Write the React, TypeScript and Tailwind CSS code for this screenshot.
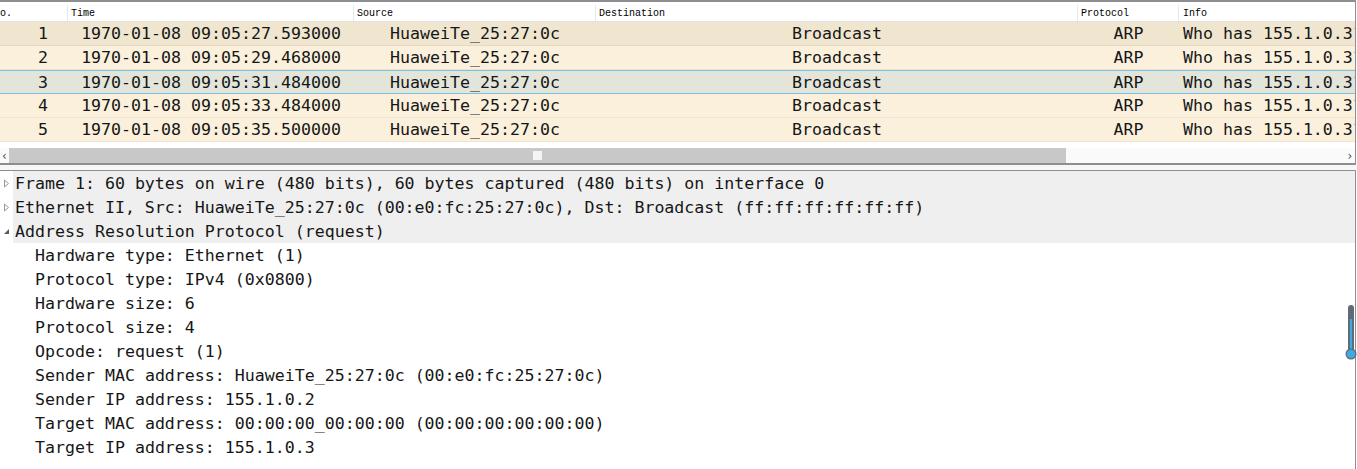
import React from 'react';

interface Packet {
  no: number;
  time: string;
  source: string;
  destination: string;
  protocol: string;
  info: string;
}

const packets: Packet[] = [
  { no: 1, time: '1970-01-08 09:05:27.593000', source: 'HuaweiTe_25:27:0c', destination: 'Broadcast', protocol: 'ARP', info: 'Who has 155.1.0.3? Tell 155.1.0.2' },
  { no: 2, time: '1970-01-08 09:05:29.468000', source: 'HuaweiTe_25:27:0c', destination: 'Broadcast', protocol: 'ARP', info: 'Who has 155.1.0.3? Tell 155.1.0.2' },
  { no: 3, time: '1970-01-08 09:05:31.484000', source: 'HuaweiTe_25:27:0c', destination: 'Broadcast', protocol: 'ARP', info: 'Who has 155.1.0.3? Tell 155.1.0.2' },
  { no: 4, time: '1970-01-08 09:05:33.484000', source: 'HuaweiTe_25:27:0c', destination: 'Broadcast', protocol: 'ARP', info: 'Who has 155.1.0.3? Tell 155.1.0.2' },
  { no: 5, time: '1970-01-08 09:05:35.500000', source: 'HuaweiTe_25:27:0c', destination: 'Broadcast', protocol: 'ARP', info: 'Who has 155.1.0.3? Tell 155.1.0.2' },
];

const treeTop = [
  { text: 'Frame 1: 60 bytes on wire (480 bits), 60 bytes captured (480 bits) on interface 0', open: false },
  { text: 'Ethernet II, Src: HuaweiTe_25:27:0c (00:e0:fc:25:27:0c), Dst: Broadcast (ff:ff:ff:ff:ff:ff)', open: false },
  { text: 'Address Resolution Protocol (request)', open: true },
];

const arpFields = [
  'Hardware type: Ethernet (1)',
  'Protocol type: IPv4 (0x0800)',
  'Hardware size: 6',
  'Protocol size: 4',
  'Opcode: request (1)',
  'Sender MAC address: HuaweiTe_25:27:0c (00:e0:fc:25:27:0c)',
  'Sender IP address: 155.1.0.2',
  'Target MAC address: 00:00:00_00:00:00 (00:00:00:00:00:00)',
  'Target IP address: 155.1.0.3',
];

const mono = "font-['DejaVu_Sans_Mono',monospace]";
const cols = 'grid grid-cols-[68px_286px_242px_482px_101px_1fr]';

const rowStyle = (no: number) => {
  if (no === 1) return 'bg-[#f0e6d0] border-b border-[#e4dac3]';
  if (no === 3) return 'bg-[#e3e5da] border-y border-[#7cc0e4]';
  return 'bg-[#faf0dc] border-b border-[#eee4cf]';
};

export default function App() {
  return (
    <div className={`w-[1357px] h-[469px] bg-white overflow-hidden relative text-[#161616] ${mono}`}>
      {/* Packet list */}
      <div className="w-[1356px] h-[165px] border-t-2 border-b-2 border-r border-[#8e8e92] flex flex-col">
        {/* Column header */}
        <div className={`${cols} h-[20px] shrink-0 border-b border-[#e3e3e3] bg-white pt-[3px] text-[10px] text-black font-['Liberation_Mono',monospace]`}>
          <div className="border-r border-[#e2e8f0] flex items-center overflow-hidden">
            <span className="-ml-[6px]">No.</span>
          </div>
          <div className="border-r border-[#e2e8f0] flex items-center pl-[3px]">Time</div>
          <div className="border-r border-[#e2e8f0] flex items-center pl-[3px]">Source</div>
          <div className="border-r border-[#e2e8f0] flex items-center pl-[3px]">Destination</div>
          <div className="border-r border-[#e2e8f0] flex items-center pl-[3px]">Protocol</div>
          <div className="flex items-center pl-[4px]">Info</div>
        </div>

        {/* Rows */}
        {packets.map((p) => (
          <div key={p.no} className={`${cols} h-[24px] shrink-0 items-center pt-[2px] text-[16.6px] leading-none ${rowStyle(p.no)}`}>
            <div className="text-right pr-[20px]">{p.no}</div>
            <div className="text-center">{p.time}</div>
            <div className="text-center">{p.source}</div>
            <div className="text-center">{p.destination}</div>
            <div className="text-center">{p.protocol}</div>
            <div className="pl-[4px] whitespace-nowrap overflow-hidden">{p.info}</div>
          </div>
        ))}

        <div className="h-[6px] shrink-0 bg-white" />

        {/* Horizontal scrollbar */}
        <div className="h-[15px] shrink-0 flex items-center bg-[#fafafa]">
          <div className="w-[9px] h-full flex items-center justify-center text-[12px] text-[#505050] font-['DejaVu_Sans',sans-serif]">‹</div>
          <div className="w-[1057px] h-full bg-[#c8c8c8] flex items-center justify-center">
            <div className="w-[9px] h-[9px] bg-[#f4f4f4]" />
          </div>
          <div className="flex-1" />
          <div className="w-[10px] h-full flex items-center justify-center text-[12px] text-[#505050] font-['DejaVu_Sans',sans-serif]">›</div>
        </div>
      </div>

      {/* Splitter */}
      <div className="h-[5px] bg-[#f7f7f7]" />

      {/* Packet details */}
      <div className="w-[1356px] h-[299px] border-t border-r border-[#8e8e92] text-[16.6px] leading-none">
        {treeTop.map((t) => (
          <div key={t.text} className="h-[24px] flex items-center">
            <div className="w-[13px] h-full flex items-center justify-center">
              {t.open ? (
                <svg width="7" height="7" viewBox="0 0 7 7">
                  <path d="M1 6 L6 6 L6 1 Z" fill="#5a5a5a" />
                </svg>
              ) : (
                <svg width="7" height="9" viewBox="0 0 7 9">
                  <path d="M1.5 1 L5.5 4.5 L1.5 8 Z" fill="none" stroke="#9a9a9a" strokeWidth="1" />
                </svg>
              )}
            </div>
            <div className="flex-1 h-full bg-[#efefef] flex items-center pl-[2px] pt-[2px] whitespace-nowrap">{t.text}</div>
          </div>
        ))}
        {arpFields.map((f) => (
          <div key={f} className="h-[24px] flex items-center pl-[35px] pt-[2px] whitespace-nowrap">{f}</div>
        ))}
      </div>

      {/* Vertical scroll indicator */}
      <svg className="absolute left-[1345px] top-[304px]" width="12" height="58" viewBox="0 0 12 58">
        <rect x="3" y="1" width="6" height="50" rx="3" fill="#5f6b75" />
        <rect x="5" y="15" width="2" height="34" fill="#3fa9e0" />
        <circle cx="6" cy="50" r="5.5" fill="#5f6b75" />
        <circle cx="6" cy="50" r="4.3" fill="#3fa9e0" />
      </svg>
    </div>
  );
}
